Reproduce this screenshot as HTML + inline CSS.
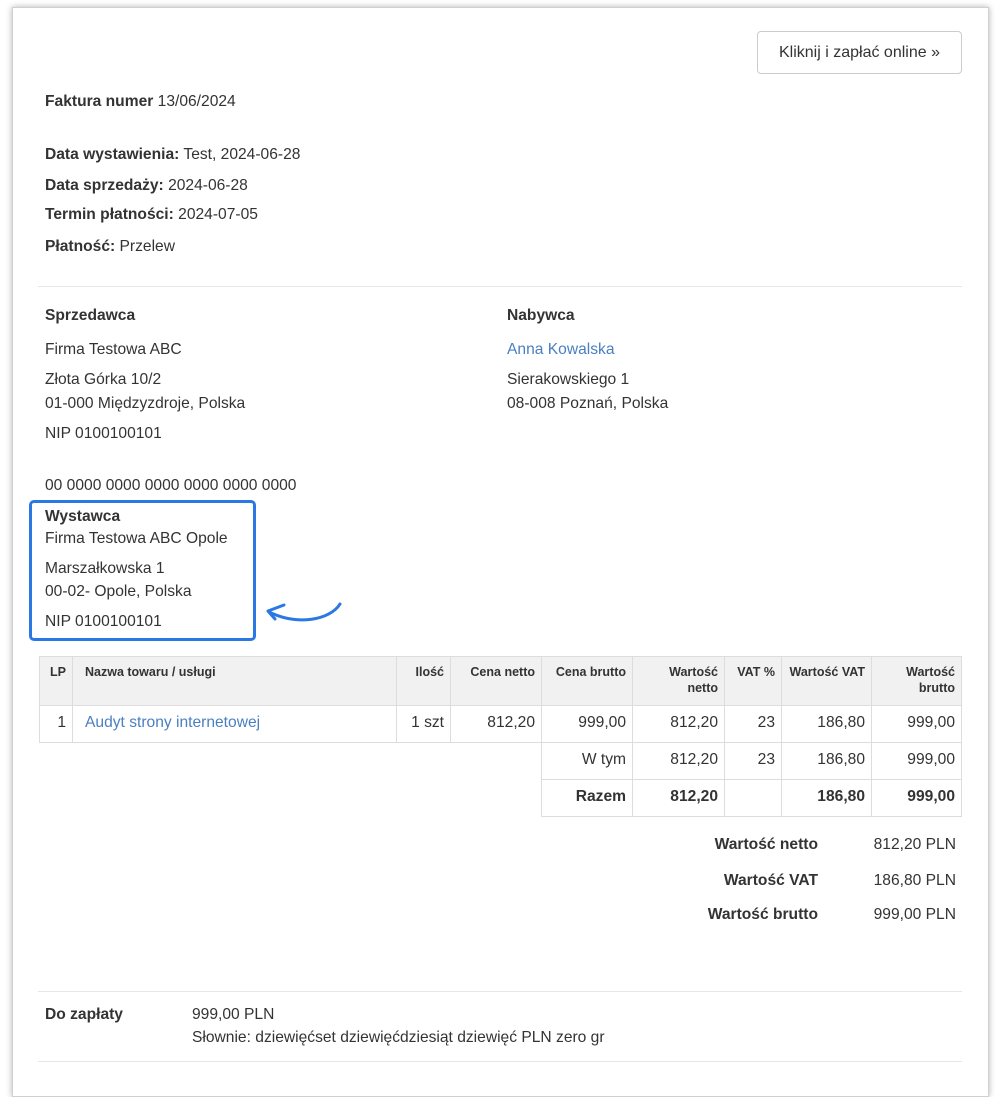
<!DOCTYPE html>
<html><head><meta charset="utf-8">
<style>
*{margin:0;padding:0;box-sizing:border-box}
body{width:1000px;height:1080px;background:#fff;font-family:"Liberation Sans",sans-serif;font-size:15.6px;color:#333;position:relative;overflow:hidden}
.card{position:absolute;left:12px;top:7px;width:977px;height:1090px;background:#fff;border:1px solid #d0d0d0;box-shadow:0 0 6px rgba(0,0,0,.3)}
.t{position:absolute;line-height:20px;white-space:nowrap}
b{font-weight:bold}
.blue{color:#4a7fc1}
.hr{position:absolute;left:38px;width:924px;height:1px;background:#e6e6e6}
.btn{position:absolute;left:757px;top:31px;width:205px;height:43px;border:1px solid #ccc;border-radius:4px;font-size:16px;line-height:41px;text-align:center;color:#333}
.box{position:absolute;left:29px;top:500px;width:227px;height:141px;border:3px solid #2a78e4;border-radius:5px}
table{position:absolute;left:39px;top:656px;border-collapse:collapse;font-size:15.6px}
td,th{border:1px solid #ddd;padding:0 6px;text-align:right;vertical-align:top}
th{background:#f1f1f1;font-size:12.5px;font-weight:bold;height:49px;padding-top:7px;line-height:16px;color:#333}
td{height:37px;line-height:34px}
.nb{border:none}
.sum{position:absolute;line-height:20px;white-space:nowrap}
</style></head><body>
<div class="card"></div>
<div class="btn">Kliknij i zapłać online »</div>
<div class="t" style="left:45px;top:92px"><b>Faktura numer</b> 13/06/2024</div>
<div class="t" style="left:45px;top:145px"><b>Data wystawienia:</b> Test, 2024-06-28</div>
<div class="t" style="left:45px;top:176px"><b>Data sprzedaży:</b> 2024-06-28</div>
<div class="t" style="left:45px;top:205px"><b>Termin płatności:</b> 2024-07-05</div>
<div class="t" style="left:45px;top:237px"><b>Płatność:</b> Przelew</div>
<div class="hr" style="top:286px"></div>
<div class="t" style="left:45px;top:306px"><b>Sprzedawca</b></div>
<div class="t" style="left:45px;top:340px">Firma Testowa ABC</div>
<div class="t" style="left:45px;top:370px">Złota Górka 10/2</div>
<div class="t" style="left:45px;top:394px">01-000 Międzyzdroje, Polska</div>
<div class="t" style="left:45px;top:424px">NIP 0100100101</div>
<div class="t" style="left:45px;top:476px">00 0000 0000 0000 0000 0000 0000</div>
<div class="t" style="left:507px;top:306px"><b>Nabywca</b></div>
<div class="t blue" style="left:507px;top:340px">Anna Kowalska</div>
<div class="t" style="left:507px;top:370px">Sierakowskiego 1</div>
<div class="t" style="left:507px;top:394px">08-008 Poznań, Polska</div>
<div class="box"></div>
<div class="t" style="left:45px;top:507px"><b>Wystawca</b></div>
<div class="t" style="left:45px;top:529px">Firma Testowa ABC Opole</div>
<div class="t" style="left:45px;top:559px">Marszałkowska 1</div>
<div class="t" style="left:45px;top:582px">00-02- Opole, Polska</div>
<div class="t" style="left:45px;top:612px">NIP 0100100101</div>
<svg style="position:absolute;left:260px;top:598px" width="90" height="40" viewBox="0 0 90 40">
<path d="M80 6 C70 22 38 28 9 14" stroke="#2a78e4" stroke-width="3" fill="none" stroke-linecap="round"/>
<path d="M24 7 L8 13 L15 21" stroke="#2a78e4" stroke-width="3" fill="none" stroke-linecap="round" stroke-linejoin="round"/>
</svg>
<table>
<tr><th style="width:33px">LP</th><th style="width:324px;text-align:left;padding-left:12px">Nazwa towaru / usługi</th><th style="width:54px">Ilość</th><th style="width:91px">Cena netto</th><th style="width:91px">Cena brutto</th><th style="width:92px">Wartość<br>netto</th><th style="width:57px">VAT %</th><th style="width:90px">Wartość VAT</th><th style="width:90px">Wartość<br>brutto</th></tr>
<tr><td>1</td><td style="text-align:left;padding-left:12px" class="blue">Audyt strony internetowej</td><td>1 szt</td><td>812,20</td><td>999,00</td><td>812,20</td><td>23</td><td>186,80</td><td>999,00</td></tr>
<tr><td class="nb"></td><td class="nb"></td><td class="nb"></td><td class="nb" style="border-right:1px solid #ddd"></td><td>W tym</td><td>812,20</td><td>23</td><td>186,80</td><td>999,00</td></tr>
<tr><td class="nb"></td><td class="nb"></td><td class="nb"></td><td class="nb" style="border-right:1px solid #ddd"></td><td><b>Razem</b></td><td><b>812,20</b></td><td></td><td><b>186,80</b></td><td><b>999,00</b></td></tr>
</table>
<div class="sum" style="right:182px;top:835px"><b>Wartość netto</b></div>
<div class="sum" style="right:44px;top:835px">812,20 PLN</div>
<div class="sum" style="right:182px;top:871px"><b>Wartość VAT</b></div>
<div class="sum" style="right:44px;top:871px">186,80 PLN</div>
<div class="sum" style="right:182px;top:905px"><b>Wartość brutto</b></div>
<div class="sum" style="right:44px;top:905px">999,00 PLN</div>
<div class="hr" style="top:991px"></div>
<div class="t" style="left:45px;top:1005px"><b>Do zapłaty</b></div>
<div class="t" style="left:192px;top:1005px">999,00 PLN</div>
<div class="t" style="left:192px;top:1028px">Słownie: dziewięćset dziewięćdziesiąt dziewięć PLN zero gr</div>
<div class="hr" style="top:1061px"></div>
</body></html>
